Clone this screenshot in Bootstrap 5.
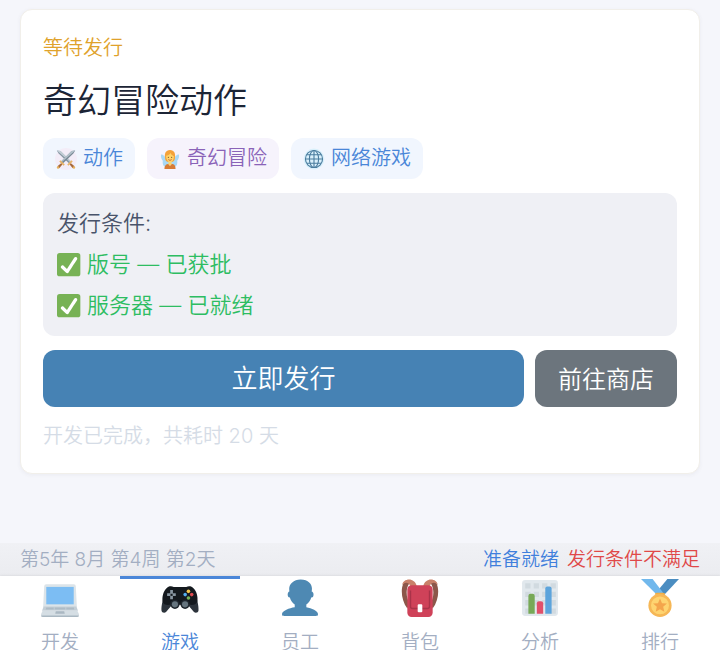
<!DOCTYPE html>
<html lang="zh-CN">
<head>
<meta charset="utf-8">
<meta name="viewport" content="width=device-width, initial-scale=1">
<title>奇幻冒险动作</title>
<link href="https://cdn.jsdelivr.net/npm/bootstrap@5.3.0/dist/css/bootstrap.min.css" rel="stylesheet">
<style>
  body { font-family: Inter, "Noto Sans CJK SC", sans-serif; font-weight: 350; background: #f5f6fb; overflow: hidden; }
  .release-card { margin: 9px 20px 0; padding: 22px; border: 1px solid #f1efea; border-radius: 12px; box-shadow: 0 1px 4px rgba(60, 60, 80, .06); }
  .stack { gap: 14px; }
  .state { font-size: 20px; line-height: 32px; color: #dfa22b; }
  .game-title { font-size: 34px; line-height: 46px; font-weight: 350; color: #1c2536; }
  .tags { gap: 12px; }
  .tag { gap: 6px; padding: 0 12px; font-size: 20px; line-height: 41px; border-radius: 12px; background: #f1f6fe; color: #4a86d8; }
  .tag svg, .cond svg, .tab svg { flex: none; }
  .tag-violet { background: #f6f3fc; color: #8a63b8; }
  .conds { padding: 10px 14px; border-radius: 12px; background: #eff0f5; font-size: 22px; line-height: 41px; color: #48536a; }
  .cond { gap: 6px; color: #2dbd62; }
  .actions { gap: 11px; }
  .actions .btn { height: 57px; border: 0; border-radius: 12px; font-weight: 350; color: #fff; }
  .btn-release { background: #4682b4; font-size: 26px; }
  .btn-shop { background: #6c757d; font-size: 24px; padding: 8px 23px 6px; }
  .note { font-size: 20px; line-height: 30px; color: #d5dce6; }
  .status { padding: 0 20px; font-size: 19px; line-height: 33px; background: linear-gradient(#f0f1f5, #ebecf0); color: #a3aec2; }
  .status-ready { color: #3f7fdc; }
  .status-error { color: #e04848; }
  .tabs { height: 74px; box-shadow: 0 -1px 2px rgba(0, 0, 0, .06); }
  .tab { border-top: 3px solid transparent; font-size: 19px; line-height: 22px; gap: 15px; color: #a3aec2; }
  .tab-active { border-color: #4a86d8; color: #4a86d8; }
</style>
</head>
<body class="d-flex flex-column vh-100">
<main class="flex-grow-1">
  <section class="release-card stack bg-white d-flex flex-column">
    <div class="state">等待发行</div>
    <h1 class="game-title m-0">奇幻冒险动作</h1>
    <div class="tags d-flex flex-wrap">
      <span class="tag d-flex align-items-center">
        <svg width="22" height="22" viewBox="0 0 36 36" aria-hidden="true">
          <circle cx="18" cy="18" r="18" fill="#f3edf8"/>
          <g><path fill="#8696a3" d="M3 4l6 1 18 18-3 3L6 9z"/><path fill="#c4d0d8" d="M3 4l6 1 18 18-1 1z"/><path fill="#e9b466" d="M20 27l7-7 2 2-7 7z"/><path fill="#a6693c" d="M26 25l6 5-3 3-5-6z"/><circle cx="31" cy="32" r="2" fill="#e8b05c"/></g>
          <g transform="matrix(-1 0 0 1 36 0)"><path fill="#788995" d="M3 4l6 1 18 18-3 3L6 9z"/><path fill="#b4c2cb" d="M3 4l6 1 18 18-1 1z"/><path fill="#e9b466" d="M20 27l7-7 2 2-7 7z"/><path fill="#a6693c" d="M26 25l6 5-3 3-5-6z"/><circle cx="31" cy="32" r="2" fill="#e8b05c"/></g>
        </svg>动作</span>
      <span class="tag tag-violet d-flex align-items-center">
        <svg width="22" height="20" viewBox="0 0 36 36" aria-hidden="true">
          <path fill="#a9d8f5" d="M14 22C8 10 3 9 2 10c-1 3 0 8 3 11-1 5 1 10 4 11l9-5 9 5c3-1 5-6 4-11 3-3 4-8 3-11-1-1-6 0-12 12z"/>
          <path fill="#f4a23a" d="M18 2C10 2 8 9 9 15c0 4 1 7 4 8h10c3-1 4-4 4-8 1-6-1-13-9-13z"/>
          <path fill="#ffd46b" d="M11 12c3 0 6-2 8-5 1 3 4 5 6 6 0 6-2 10-7 11-4-1-7-5-7-12z"/>
          <circle cx="15" cy="15" r="1" fill="#6b4529"/><circle cx="21" cy="15" r="1" fill="#6b4529"/><path d="M15 19q3 3 6 0" fill="none" stroke="#c35b39" stroke-width="1.5"/>
          <path fill="#d77b35" d="M8 36c0-7 4-9 7-9l3 3 3-3c4 0 7 2 7 9z"/><path fill="#ffd46b" d="M15 24h6v3l-3 3-3-3z"/>
        </svg>奇幻冒险</span>
      <span class="tag d-flex align-items-center">
        <svg width="22" height="22" viewBox="0 0 36 36" aria-hidden="true">
          <circle cx="18" cy="18" r="17" fill="#d9f0fb"/>
          <g fill="none" stroke="#4a7c9e" stroke-width="1.8"><circle cx="18" cy="18" r="14"/><ellipse cx="18" cy="18" rx="7.5" ry="14"/><path d="M18 4v28M4 18h28M6.500 11h23M6.500 25h23"/></g>
        </svg>网络游戏</span>
    </div>
    <div class="conds">
      <div>发行条件:</div>
      <div class="cond d-flex align-items-center">
        <svg width="24" height="24" viewBox="0 0 36 36" aria-hidden="true"><rect width="35" height="35" rx="4" fill="#77b255"/><path fill="#fff" d="M29.280 6.362c-1.156-.751-2.704-.422-3.458.736L14.936 23.877l-5.029-4.650c-1.014-.938-2.596-.875-3.533.138-.937 1.014-.875 2.596.139 3.533l7.209 6.666c.48.445 1.090.665 1.696.665.673 0 1.534-.282 2.099-1.139.332-.506 12.500-19.270 12.500-19.270.751-1.159.421-2.707-.737-3.458z"/></svg>版号 — 已获批</div>
      <div class="cond d-flex align-items-center">
        <svg width="24" height="24" viewBox="0 0 36 36" aria-hidden="true"><rect width="35" height="35" rx="4" fill="#77b255"/><path fill="#fff" d="M29.280 6.362c-1.156-.751-2.704-.422-3.458.736L14.936 23.877l-5.029-4.650c-1.014-.938-2.596-.875-3.533.138-.937 1.014-.875 2.596.139 3.533l7.209 6.666c.48.445 1.090.665 1.696.665.673 0 1.534-.282 2.099-1.139.332-.506 12.500-19.270 12.500-19.270.751-1.159.421-2.707-.737-3.458z"/></svg>服务器 — 已就绪</div>
    </div>
    <div class="actions d-flex">
      <button type="button" class="btn btn-release flex-grow-1">立即发行</button>
      <button type="button" class="btn btn-shop">前往商店</button>
    </div>
    <div class="note">开发已完成，共耗时 20 天</div>
  </section>
</main>
<div class="status d-flex justify-content-between">
  <span>第5年 8月 第4周 第2天</span>
  <span class="d-flex gap-2"><span class="status-ready">准备就绪</span> <span class="status-error">发行条件不满足</span></span>
</div>
<nav class="tabs d-flex bg-white">
  <a href="#dev" class="tab col d-flex flex-column align-items-center text-decoration-none">
    <svg width="38" height="38" viewBox="0 0 36 36" aria-hidden="true"><path fill="#dce4e9" d="M3 7q0-2 2-2h26q2 0 2 2l1 20H2z"/><path fill="#7cbdf3" d="M5 7.500h26V24H5z"/><path fill="#c3ced6" d="M2.500 26h31l1.500 4H1z"/><path fill="#aebbc5" d="M5 27h7v2H4.500zM13 27h10v2H13zM24 27h7l.5 2H24z"/><path fill="#d5dee4" d="M1.500 30h33l1.500 3.500q0 2.500-2 2.500H2q-2 0-2-2.500z"/><path fill="#aab8c2" d="M14 30.500h8l.5 2.500h-9zM0 34.500h36Q36 36 34 36H2q-2 0-2-1.500z"/></svg>开发</a>
  <a href="#games" class="tab tab-active col d-flex flex-column align-items-center text-decoration-none" aria-current="page">
    <svg width="38" height="38" viewBox="0 0 36 36" aria-hidden="true"><path fill="#2c333b" d="M4 13C2 18 0 26 .5 30c.3 2 3 2.500 4.500 1l6-7h14l6 7c1.500 1.500 4.200 1 4.500-1 .5-4-1.500-12-3.500-17z"/><path fill="#14191e" d="M5 9c2-2.500 5-2.500 7-1.500h12c2-1 5-1 7 1.500 3 3 4 8 3.500 12-1 3-4 4-7 3.500h-19C5 25 2 24 1.500 21 1 17 2 12 5 9z"/><circle cx="13.200" cy="24" r="4.400" fill="#20272e"/><circle cx="22.800" cy="24" r="4.400" fill="#20272e"/><circle cx="13.200" cy="24" r="2.900" fill="#66757f"/><circle cx="22.800" cy="24" r="2.900" fill="#66757f"/><path fill="#8795a0" d="M8.700 10.500h2.600v3H14v2.600h-2.700v3H8.700v-3H5.800v-2.600h2.900z"/><path fill="#14191e" d="M9 14h2v2H9z"/><circle cx="26" cy="11.700" r="1.700" fill="#f5c64c"/><circle cx="26" cy="18" r="1.700" fill="#77b255"/><circle cx="22.900" cy="14.800" r="1.700" fill="#55acee"/><circle cx="29.100" cy="14.800" r="1.700" fill="#dd4b50"/></svg>游戏</a>
  <a href="#staff" class="tab col d-flex flex-column align-items-center text-decoration-none">
    <svg width="38" height="38" viewBox="0 0 36 36" aria-hidden="true"><path fill="#4e89b3" d="M24 26.799v-2.566c2-1.348 4.080-3.779 4.703-6.896.186.103.206.17.413.17.991 0 1.709-1.287 1.709-2.873 0-1.562-.823-2.827-1.794-2.865.187-.674.293-1.577.293-2.735C29.324 5.168 26 .527 18.541.527c-6.629 0-10.777 4.641-10.777 8.507 0 1.123.069 2.043.188 2.755-.911.137-1.629 1.352-1.629 2.845 0 1.587.804 2.873 1.796 2.873.206 0 .025-.067.209-.17C8.952 20.453 11 22.885 13 24.232v2.414c-5 .645-12 3.437-12 6.230v1.061C1 35 2.076 35 3.137 35h29.725C33.924 35 35 35 35 33.938v-1.061c0-2.615-6-5.225-11-6.078z"/></svg>员工</a>
  <a href="#bag" class="tab col d-flex flex-column align-items-center text-decoration-none">
    <svg width="38" height="38" viewBox="0 0 36 36" aria-hidden="true"><path fill="#8c574a" d="M6 1C-1 3-1 19 6 28l2-5C5 18 4 9 8 4zM30 1c7 2 7 18 0 27l-2-5c3-5 4-14 0-19z"/><path fill="#c98069" d="M1 6C2-1 13-2 15 7H9C8 3 3 2 1 6zM35 6C34-1 23-2 21 7h6c1-4 6-5 8-1z"/><rect x="6" y="6" width="24" height="30" rx="4" fill="#cf4259"/><path fill="none" stroke="#a93349" stroke-width="1.300" d="M9 11v15q0 2 2 2h14q2 0 2-2V11"/><rect x="15.800" y="24" width="4.400" height="7.500" rx="1" fill="#fff"/></svg>背包</a>
  <a href="#stats" class="tab col d-flex flex-column align-items-center text-decoration-none">
    <svg width="38" height="38" viewBox="0 0 36 36" aria-hidden="true"><rect x="1" y="1" width="34" height="34" rx="3" fill="#e1e8ed"/><path fill="#d1dae0" d="M4 4h5v5H4zM12 4h5v5h-5zM20 4h5v5h-5zM28 4h5v5h-5zM4 12h5v5H4zM12 12h5v5h-5zM20 12h5v5h-5zM28 12h5v5h-5zM4 20h5v5H4zM12 20h5v5h-5zM20 20h5v5h-5zM28 20h5v5h-5zM4 28h5v5H4zM28 28h5v5h-5z"/><path fill="#77a957" d="M7 33V16q0-2 2-2h2q2 0 2 2v17z"/><path fill="#e0506a" d="M15 33V23q0-2 2-2h2q2 0 2 2v10z"/><path fill="#5ca4dc" d="M23 33V9q0-2 2-2h2q2 0 2 2v24z"/></svg>分析</a>
  <a href="#rank" class="tab col d-flex flex-column align-items-center text-decoration-none">
    <svg width="38" height="38" viewBox="0 0 36 36" aria-hidden="true"><path fill="#4b8dc1" d="M25 0L15 12l6 4L36 0z"/><path fill="#71b8ec" d="M11 0H0l15 15 6-2z"/><path fill="#f0ad45" d="M13 15q0-2 2-2h6q2 0 2 2z"/><circle cx="18" cy="25" r="11" fill="#f6b756"/><circle cx="18" cy="25" r="8.500" fill="#fed471"/><path fill="#f4a54c" d="M18 18.500l1.900 4.400 4.700.4-3.600 3.100 1.100 4.700-4.100-2.500-4.100 2.500 1.100-4.700-3.600-3.100 4.700-.4z"/></svg>排行</a>
</nav>
<script src="https://cdn.jsdelivr.net/npm/bootstrap@5.3.0/dist/js/bootstrap.bundle.min.js"></script>
</body>
</html>
